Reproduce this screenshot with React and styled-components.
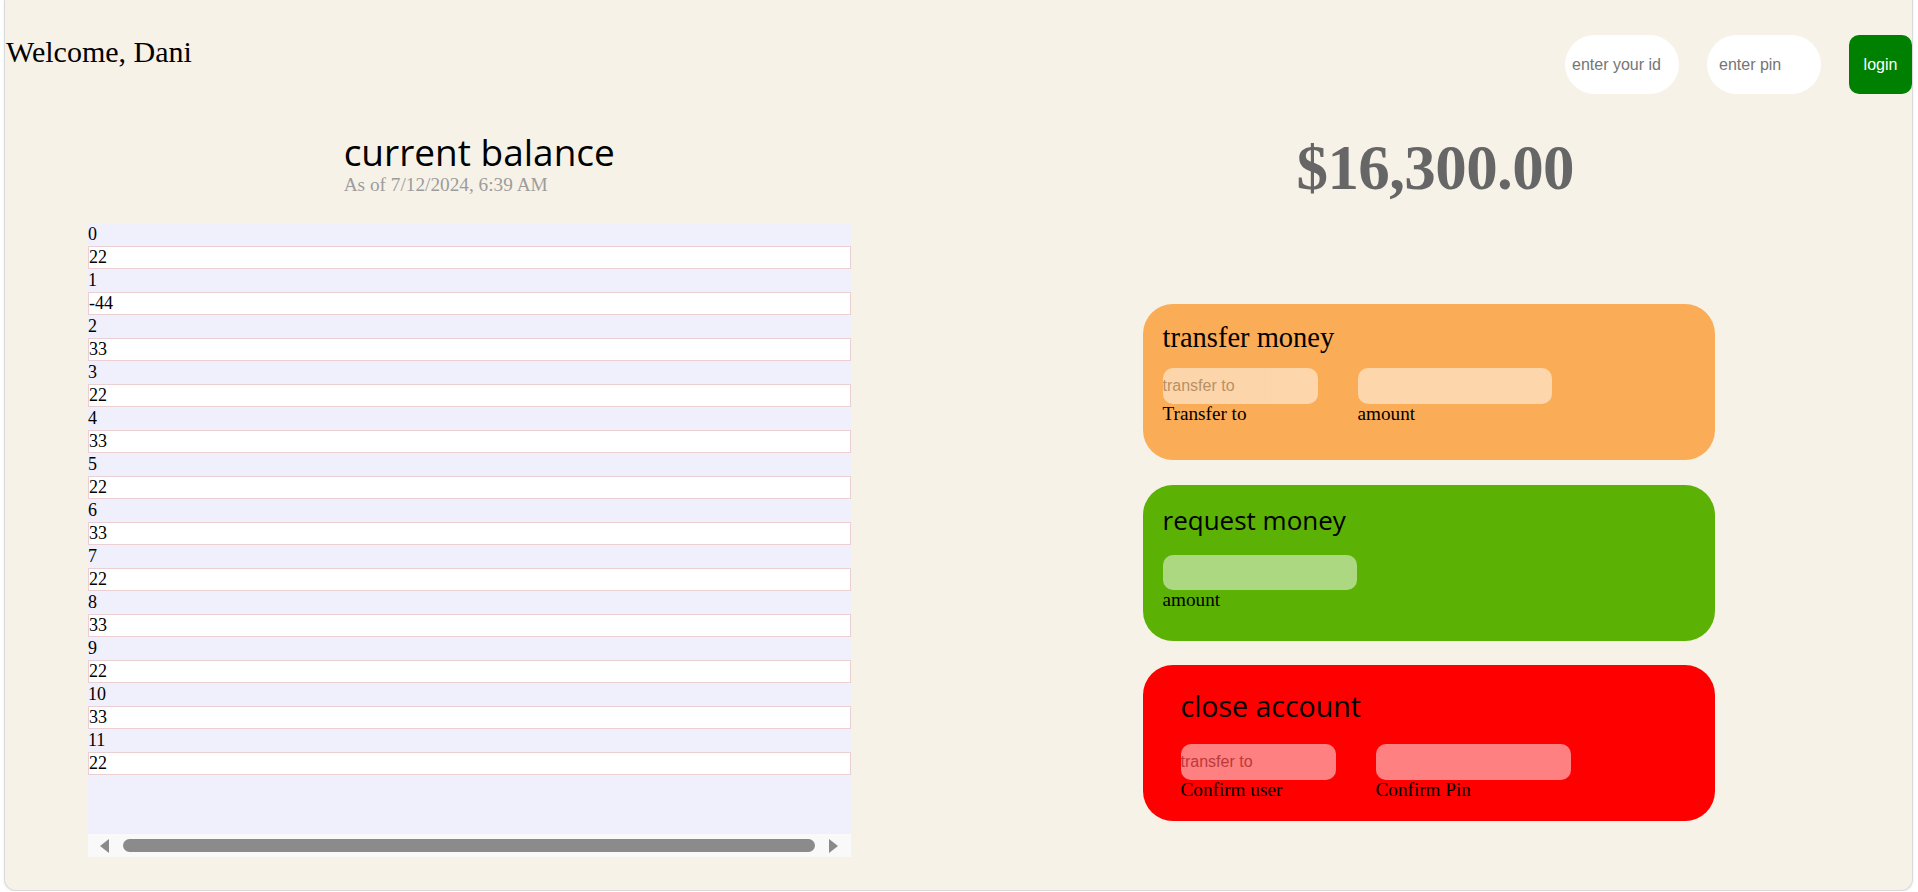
import React from 'react'
import styled, { createGlobalStyle } from 'styled-components'

const cream = '#f7f2e8'
const lavender = '#f0effc'

const transactions = [22, -44, 33, 22, 33, 22, 33, 22, 33, 22, 33, 22]

const GlobalStyle = createGlobalStyle`
html, body {
    margin: 0;
    background: #ffffff;
}
body {
    font-family: "Liberation Serif", "Times New Roman", serif;
    color: #000;
}
`

const App = () => {
    return (
        <>
            <GlobalStyle />
            <Page>
                <Header>
                    <Welcome>Welcome, Dani</Welcome>
                    <LoginForm>
                        <LoginInput $pad={7} placeholder="enter your id" />
                        <LoginInput $pad={12} placeholder="enter pin" />
                        <LoginButton>login</LoginButton>
                    </LoginForm>
                </Header>
                <Main>
                    <LeftColumn>
                        <HeadingWrap>
                            <HeadingBlock>
                                <Heading>current balance</Heading>
                                <AsOf>As of 7/12/2024, 6:39 AM</AsOf>
                            </HeadingBlock>
                        </HeadingWrap>
                        <Movements>
                            <MovementsBody>
                                {transactions.map((amount, index) => (
                                    <React.Fragment key={index}>
                                        <IndexRow>{index}</IndexRow>
                                        <AmountRow>{amount}</AmountRow>
                                    </React.Fragment>
                                ))}
                            </MovementsBody>
                            <ScrollBar>
                                <Arrow viewBox="0 0 9 14"><polygon points="9,0 9,14 0,7" /></Arrow>
                                <Thumb />
                                <Arrow viewBox="0 0 9 14"><polygon points="0,0 0,14 9,7" /></Arrow>
                            </ScrollBar>
                        </Movements>
                    </LeftColumn>
                    <RightColumn>
                        <Balance>$16,300.00</Balance>
                        <Cards>
                            <Card $bg="#fbac56" $pt={16} $pl={20}>
                                <CardTitle $font='"Liberation Serif", serif' $size={28.5} $mb={12}>transfer money</CardTitle>
                                <Fields>
                                    <Field>
                                        <CardInput $w={155} placeholder="transfer to" />
                                        <FieldLabel>Transfer to</FieldLabel>
                                    </Field>
                                    <Field>
                                        <CardInput $w={194} />
                                        <FieldLabel>amount</FieldLabel>
                                    </Field>
                                </Fields>
                            </Card>
                            <Card $bg="#5bb104" $pt={17} $pl={20}>
                                <CardTitle $font='"Open Sans", sans-serif' $size={26} $mb={17}>request money</CardTitle>
                                <Fields>
                                    <Field>
                                        <CardInput $w={194} />
                                        <FieldLabel>amount</FieldLabel>
                                    </Field>
                                </Fields>
                            </Card>
                            <Card $bg="#ff0000" $pt={23} $pl={38}>
                                <CardTitle $font='"Open Sans", sans-serif' $size={28.5} $mb={20}>close account</CardTitle>
                                <Fields>
                                    <Field>
                                        <CardInput $w={155} placeholder="transfer to" />
                                        <FieldLabel>Confirm user</FieldLabel>
                                    </Field>
                                    <Field>
                                        <CardInput $w={195} />
                                        <FieldLabel>Confirm Pin</FieldLabel>
                                    </Field>
                                </Fields>
                            </Card>
                        </Cards>
                    </RightColumn>
                </Main>
            </Page>
        </>
    )
}

const Page = styled.div`
box-sizing: border-box;
height: 891px;
margin: 0 5px 0 4px;
background-color: ${cream};
border: 1px solid #dadada;
border-top: none;
border-radius: 0 0 12px 12px;
box-shadow: 0 1px 3px rgba(0, 0, 0, 0.08);
overflow: hidden;
`

const Header = styled.header`
box-sizing: border-box;
height: 94px;
padding: 35px 0 0 1px;
display: flex;
justify-content: space-between;
align-items: flex-start;
`

const Welcome = styled.h1`
margin: 0;
font-size: 30px;
font-weight: 400;
line-height: normal;
`

const LoginForm = styled.div`
display: flex;
gap: 28px;
`

const LoginInput = styled.input`
box-sizing: border-box;
width: 114px;
height: 59px;
border: none;
border-radius: 30px;
background: #ffffff;
padding: 0 0 0 ${props => props.$pad}px;
font: 16px "Liberation Sans", Arial, sans-serif;
outline: none;
&::placeholder {
    color: #757575;
}
`

const LoginButton = styled.button`
width: 63px;
height: 59px;
border: none;
border-radius: 10px;
background: #008000;
color: #ffffff;
font: 16px "Liberation Sans", Arial, sans-serif;
padding: 0;
`

const Main = styled.main`
display: grid;
grid-template-columns: 1fr 1fr;
padding-top: 36px;
`

const LeftColumn = styled.section`
display: flex;
flex-direction: column;
`

const HeadingWrap = styled.div`
text-align: center;
padding-right: 5px;
`

const HeadingBlock = styled.div`
display: inline-block;
text-align: left;
`

const Heading = styled.h2`
margin: 0;
font-family: "Open Sans", sans-serif;
font-size: 37px;
font-weight: 400;
line-height: 44px;
`

const AsOf = styled.div`
font-size: 19.3px;
color: #9c9c9c;
line-height: 21px;
`

const Movements = styled.div`
margin: 28px 0 0 83px;
width: 763px;
`

const MovementsBody = styled.div`
height: 611px;
background-color: ${lavender};
display: flex;
flex-direction: column;
`

const IndexRow = styled.div`
height: 23px;
line-height: 23px;
font-size: 18px;
`

const AmountRow = styled.div`
box-sizing: border-box;
height: 23px;
line-height: 21px;
font-size: 18px;
background: #ffffff;
border: 1px solid #ead0d2;
`

const ScrollBar = styled.div`
box-sizing: border-box;
height: 23px;
background: #f9f9f9;
display: flex;
align-items: center;
gap: 14px;
padding: 0 13px 0 12px;
`

const Arrow = styled.svg`
width: 9px;
height: 14px;
fill: #8a8a8a;
flex: none;
`

const Thumb = styled.div`
flex: 1;
height: 13px;
border-radius: 7px;
background: #8b8b8b;
`

const RightColumn = styled.section`
display: flex;
flex-direction: column;
`

const Balance = styled.div`
margin-top: 2px;
text-align: center;
font-size: 63px;
font-weight: 700;
letter-spacing: -0.6px;
color: #666666;
line-height: normal;
`

const Cards = styled.div`
margin-top: 99px;
padding-left: 184px;
display: flex;
flex-direction: column;
gap: 24.5px;
`

const Card = styled.div`
box-sizing: border-box;
width: 572px;
height: 156px;
border-radius: 30px;
background-color: ${props => props.$bg};
padding: ${props => props.$pt}px 0 0 ${props => props.$pl}px;
`

const CardTitle = styled.h3`
margin: 0 0 ${props => props.$mb}px;
font-family: ${props => props.$font};
font-size: ${props => props.$size}px;
font-weight: 400;
line-height: 36px;
`

const Fields = styled.div`
display: flex;
gap: 40px;
`

const Field = styled.label`
display: flex;
flex-direction: column;
`

const CardInput = styled.input`
box-sizing: border-box;
width: ${props => props.$w}px;
height: 35.5px;
border: none;
border-radius: 10px;
background: #ffffff;
opacity: 0.5;
padding: 0;
font: 16px "Liberation Sans", Arial, sans-serif;
outline: none;
&::placeholder {
    color: #757575;
}
`

const FieldLabel = styled.span`
font-size: 19.2px;
line-height: 20px;
`

export default App
